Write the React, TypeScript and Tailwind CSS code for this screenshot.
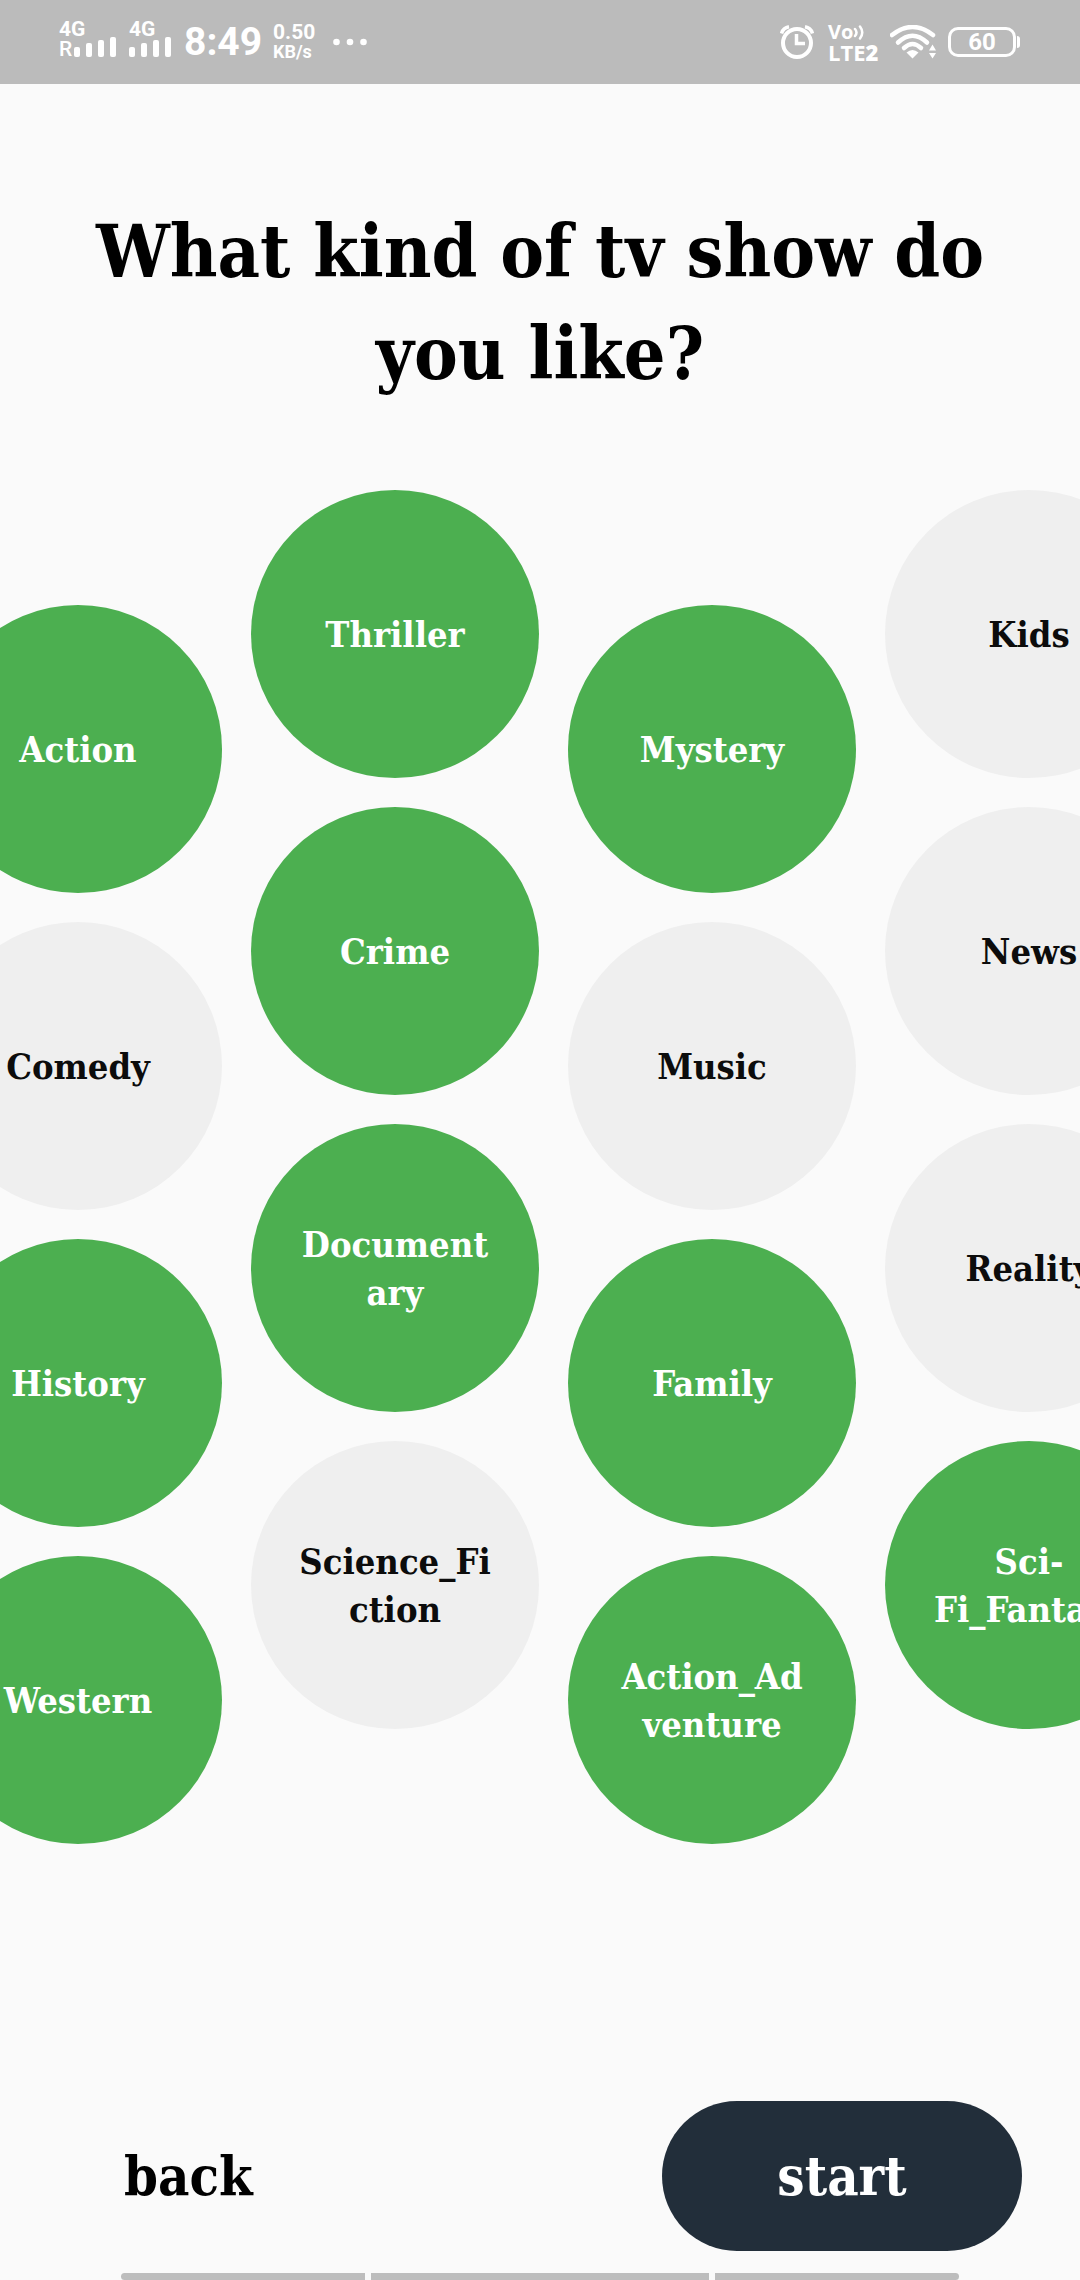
import { useState } from "react";

type Genre = { name: string; lines: string[]; liked: boolean };

const columns: Genre[][] = [
  [
    { name: "Action", lines: ["Action"], liked: true },
    { name: "Comedy", lines: ["Comedy"], liked: false },
    { name: "History", lines: ["History"], liked: true },
    { name: "Western", lines: ["Western"], liked: true },
  ],
  [
    { name: "Thriller", lines: ["Thriller"], liked: true },
    { name: "Crime", lines: ["Crime"], liked: true },
    { name: "Documentary", lines: ["Document", "ary"], liked: true },
    { name: "Science_Fiction", lines: ["Science_Fi", "ction"], liked: false },
  ],
  [
    { name: "Mystery", lines: ["Mystery"], liked: true },
    { name: "Music", lines: ["Music"], liked: false },
    { name: "Family", lines: ["Family"], liked: true },
    { name: "Action_Adventure", lines: ["Action_Ad", "venture"], liked: true },
  ],
  [
    { name: "Kids", lines: ["Kids"], liked: false },
    { name: "News", lines: ["News"], liked: false },
    { name: "Reality", lines: ["Reality"], liked: false },
    { name: "Sci-Fi_Fantasy", lines: ["Sci-", "Fi_Fantasy"], liked: true },
  ],
];

function Bars() {
  return (
    <svg viewBox="0 0 42 20" className="h-5 w-[42px]" fill="currentColor" aria-hidden="true">
      <rect x="0" y="10" width="6" height="10" rx="2" />
      <rect x="12" y="6" width="6" height="14" rx="2" />
      <rect x="24" y="3" width="6" height="17" rx="2" />
      <rect x="36" y="0" width="6" height="20" rx="2" />
    </svg>
  );
}

function AlarmIcon() {
  return (
    <svg viewBox="0 0 34 34" className="h-[34px] w-[34px]" fill="none" stroke="currentColor" aria-hidden="true">
      <circle cx="17" cy="18" r="14" strokeWidth="4" />
      <path d="M16.500 9v9.500H25" strokeWidth="3.500" />
      <path d="M1.500 8.500Q3 3 9 1.800M32.500 8.500Q31 3 25 1.800" strokeWidth="3.500" />
    </svg>
  );
}

function WifiIcon() {
  return (
    <svg viewBox="0 0 46 34" className="h-[34px] w-[46px]" fill="none" stroke="currentColor" strokeLinecap="round" aria-hidden="true">
      <path d="M2 10Q22.500 -6 43 10" strokeWidth="4.500" />
      <path d="M8 17.500Q22.500 4 37 17.500" strokeWidth="4.500" />
      <path d="M14 23Q22.500 15 31 23" strokeWidth="4.500" />
      <path d="M16.500 27.500Q22.500 22.500 28.500 27.500L22.500 33.500Z" fill="currentColor" stroke="none" />
      <path d="M39 25.500L42.500 19.500L46 25.500ZM39 28L42.500 33.500L46 28Z" fill="currentColor" stroke="none" />
    </svg>
  );
}

function StatusBar() {
  return (
    <header className="flex h-[84px] items-center justify-between bg-[#bbbbbb] pr-[60px] pl-[59px] font-['Roboto',sans-serif] text-white">
      <div className="flex items-center">
        <div className="flex w-[58px] flex-col pb-1.5">
          <span className="text-[21px] leading-4 font-bold">4G</span>
          <div className="flex items-end gap-[3px]">
            <span className="w-3 text-[21px] leading-4 font-medium">R</span>
            <Bars />
          </div>
        </div>
        <div className="ml-3 flex w-[43px] flex-col pb-1.5">
          <span className="text-[21px] leading-4 font-bold">4G</span>
          <Bars />
        </div>
        <span className="ml-3 w-[76px] text-[39px] leading-10 font-bold">8:49</span>
        <div className="ml-[13px] flex w-[44px] flex-col">
          <span className="text-[21px] leading-5 font-bold">0.50</span>
          <span className="text-[18px] leading-5 font-bold">KB/s</span>
        </div>
        <svg viewBox="0 0 34 8" className="ml-4 h-2 w-[34px]" fill="currentColor" aria-hidden="true">
          <circle cx="3.500" cy="4" r="3.300" />
          <circle cx="17" cy="4" r="3.300" />
          <circle cx="30.500" cy="4" r="3.300" />
        </svg>
      </div>
      <div className="flex items-center">
        <AlarmIcon />
        <div className="ml-[14px] flex w-[54px] flex-col">
          <span className="flex items-center font-['Open_Sans',sans-serif] text-[20px] leading-5 font-bold">
            Vo
            <svg viewBox="0 0 12 16" className="h-4 w-3" fill="none" stroke="currentColor" strokeWidth="2.500" strokeLinecap="round" aria-hidden="true">
              <path d="M2 5Q5 8.500 2 12M7 2.500Q11.500 8.500 7 14.500" />
            </svg>
          </span>
          <span className="flex items-center font-['Open_Sans',sans-serif] text-[22px] leading-5 font-bold">
            LTE
            <span className="font-['Open_Sans',sans-serif] font-extrabold">2</span>
          </span>
        </div>
        <span className="ml-2">
          <WifiIcon />
        </span>
        <div className="ml-3 flex items-center gap-px">
          <span className="flex h-[30px] w-[68px] items-center justify-center rounded-[10px] border-3 border-white text-[24px] leading-6 font-bold">
            60
          </span>
          <span className="h-3 w-[3px] rounded-r-full bg-white" />
        </div>
      </div>
    </header>
  );
}

export default function App() {
  const [liked, setLiked] = useState<string[]>(
    columns.flat().filter((g) => g.liked).map((g) => g.name),
  );

  const toggle = (name: string) =>
    setLiked((prev) => (prev.includes(name) ? prev.filter((n) => n !== name) : [...prev, name]));

  return (
    <div className="flex min-h-screen flex-col overflow-hidden bg-[#fafafa] font-['DejaVu_Serif_Condensed','DejaVu_Serif',serif] font-bold text-black">
      <StatusBar />
      <main className="flex grow flex-col">
        <h1 className="px-16 pt-[116px] text-center text-[73px] leading-[102px]">
          What kind of tv show do you like?
        </h1>
        <div className="-ml-[66px] flex gap-[29px] pt-[86px]">
          {columns.map((column, i) => (
            <div key={column[0].name} className={i % 2 === 0 ? "flex flex-col gap-[29px] pt-[115px]" : "flex flex-col gap-[29px]"}>
              {column.map((genre) => {
                const on = liked.includes(genre.name);
                return (
                  <button
                    key={genre.name}
                    type="button"
                    aria-pressed={on}
                    onClick={() => toggle(genre.name)}
                    className={
                      on
                        ? "flex size-72 shrink-0 flex-col items-center justify-center rounded-full bg-[#4caf50] text-[36px] leading-12 text-white"
                        : "flex size-72 shrink-0 flex-col items-center justify-center rounded-full bg-[#efefef] text-[36px] leading-12 text-[#0c0c0c]"
                    }
                  >
                    {genre.lines.map((line) => (
                      <span key={line}>{line}</span>
                    ))}
                  </button>
                );
              })}
            </div>
          ))}
        </div>
      </main>
      <footer className="flex flex-col">
        <div className="flex items-center justify-between pr-[58px] pl-[124px]">
          <button type="button" className="text-[54px] leading-[60px]">
            back
          </button>
          <button type="button" className="h-[150px] w-[360px] rounded-full bg-[#222e3a] text-[54px] leading-[60px] text-white">
            start
          </button>
        </div>
        <div className="mt-[22px] flex h-[7px] gap-[6px] px-[121px]">
          <span className="w-[244px] rounded-l bg-[#bdbdbd]" />
          <span className="grow bg-[#bdbdbd]" />
          <span className="w-[244px] rounded-r bg-[#bdbdbd]" />
        </div>
      </footer>
    </div>
  );
}
